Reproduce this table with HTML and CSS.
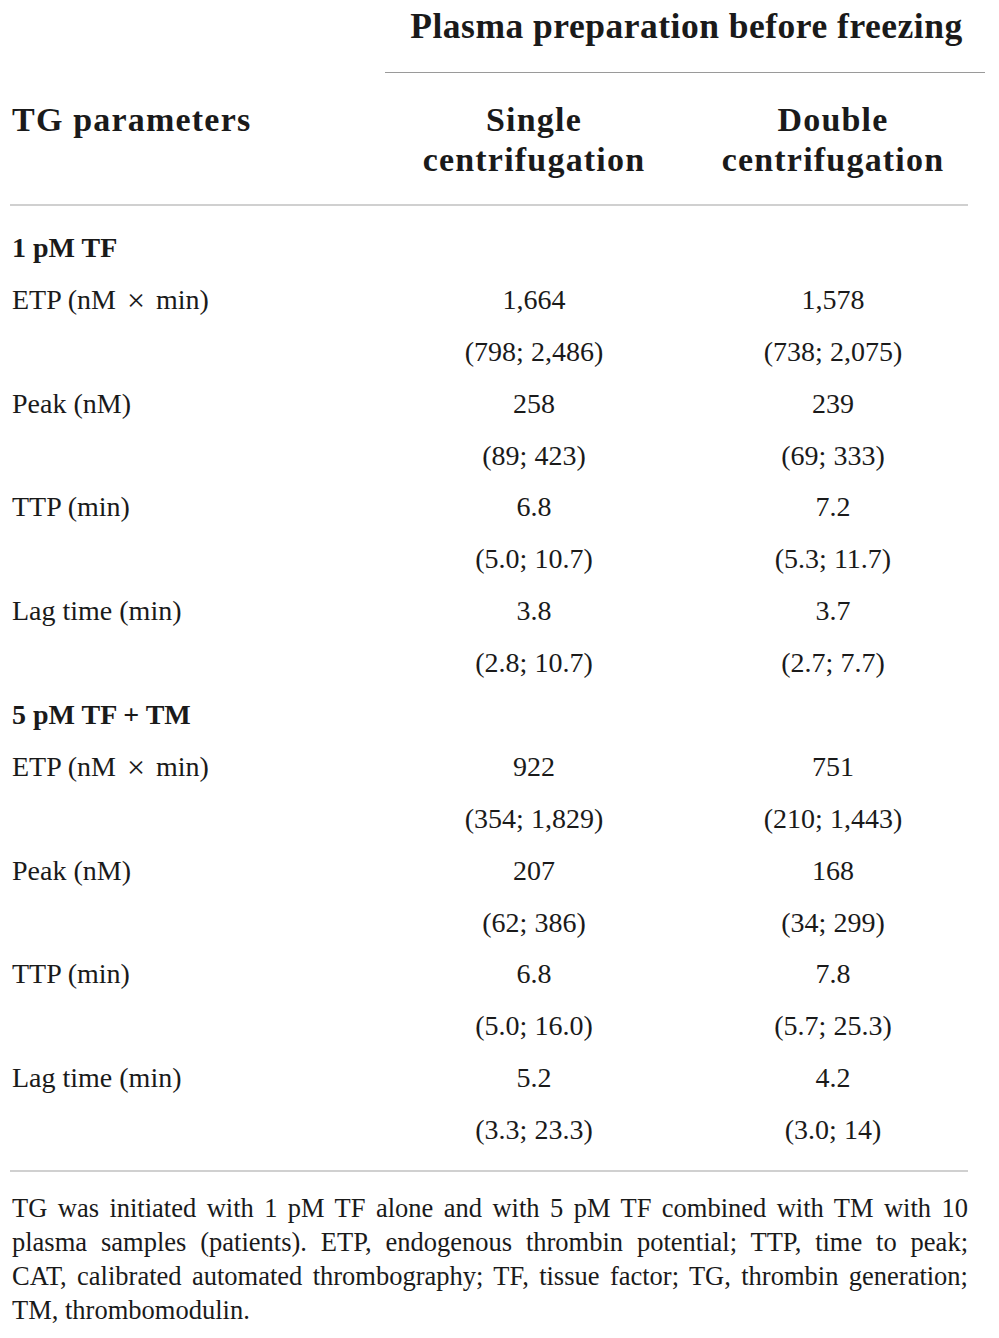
FILE: index.html
```html
<!DOCTYPE html>
<html>
<head>
<meta charset="utf-8">
<link rel="stylesheet" href="styles.css">
</head>
<body>
<div class="page">
  <div class="head-top">
    <div class="spacer"></div>
    <div class="span-title">Plasma preparation before freezing</div>
  </div>
  <div class="head-sub">
    <div class="hcell left">TG parameters</div>
    <div class="hcell">Single<br>centrifugation</div>
    <div class="hcell">Double<br>centrifugation</div>
  </div>
  <div class="body">
    <div class="row group first"><div class="lab">1 pM TF</div><div></div><div></div></div>
    <div class="row"><div class="lab">ETP (nM <span class="times">×</span> min)</div><div class="val">1,664</div><div class="val">1,578</div></div>
    <div class="row"><div class="lab"></div><div class="val">(798; 2,486)</div><div class="val">(738; 2,075)</div></div>
    <div class="row"><div class="lab">Peak (nM)</div><div class="val">258</div><div class="val">239</div></div>
    <div class="row"><div class="lab"></div><div class="val">(89; 423)</div><div class="val">(69; 333)</div></div>
    <div class="row"><div class="lab">TTP (min)</div><div class="val">6.8</div><div class="val">7.2</div></div>
    <div class="row"><div class="lab"></div><div class="val">(5.0; 10.7)</div><div class="val">(5.3; 11.7)</div></div>
    <div class="row"><div class="lab">Lag time (min)</div><div class="val">3.8</div><div class="val">3.7</div></div>
    <div class="row"><div class="lab"></div><div class="val">(2.8; 10.7)</div><div class="val">(2.7; 7.7)</div></div>
    <div class="row group"><div class="lab">5 pM TF + TM</div><div></div><div></div></div>
    <div class="row"><div class="lab">ETP (nM <span class="times">×</span> min)</div><div class="val">922</div><div class="val">751</div></div>
    <div class="row"><div class="lab"></div><div class="val">(354; 1,829)</div><div class="val">(210; 1,443)</div></div>
    <div class="row"><div class="lab">Peak (nM)</div><div class="val">207</div><div class="val">168</div></div>
    <div class="row"><div class="lab"></div><div class="val">(62; 386)</div><div class="val">(34; 299)</div></div>
    <div class="row"><div class="lab">TTP (min)</div><div class="val">6.8</div><div class="val">7.8</div></div>
    <div class="row"><div class="lab"></div><div class="val">(5.0; 16.0)</div><div class="val">(5.7; 25.3)</div></div>
    <div class="row"><div class="lab">Lag time (min)</div><div class="val">5.2</div><div class="val">4.2</div></div>
    <div class="row"><div class="lab"></div><div class="val">(3.3; 23.3)</div><div class="val">(3.0; 14)</div></div>
  </div>
  <div class="note">
    <span class="line">TG was initiated with 1 pM TF alone and with 5 pM TF combined with TM with 10</span>
    <span class="line">plasma samples (patients). ETP, endogenous thrombin potential; TTP, time to peak;</span>
    <span class="line">CAT, calibrated automated thrombography; TF, tissue factor; TG, thrombin generation;</span>
    <span class="line last">TM, thrombomodulin.</span>
  </div>
</div>
</body>
</html>
```
FILE: styles.css
```css
html, body {
  margin: 0;
  padding: 0;
  background: #ffffff;
}
body {
  font-family: "Liberation Serif", "Times New Roman", serif;
  color: #1a1a1a;
}
.page {
  width: 999px;
  padding-left: 10px;
  box-sizing: border-box;
}
.head-top {
  display: grid;
  grid-template-columns: 375px 600px;
}
.span-title {
  font-weight: bold;
  font-size: 35.5px;
  letter-spacing: 0.5px;
  line-height: 40px;
  text-align: center;
  padding: 6px 0 26px 3px;
  border-bottom: 1.5px solid #9a9a9a;
  white-space: nowrap;
}
.head-sub {
  display: grid;
  grid-template-columns: 375px 298px 300px;
  width: 958px;
  padding: 27px 0 24px 0;
  border-bottom: 2px solid #d0d0d0;
  font-weight: bold;
  font-size: 34px;
  letter-spacing: 1.2px;
  line-height: 40px;
}
.hcell {
  text-align: center;
}
.hcell.left {
  text-align: left;
  padding-left: 2px;
}
.body {
  width: 958px;
  padding-bottom: 14px;
  border-bottom: 2px solid #d0d0d0;
}
.row {
  display: grid;
  grid-template-columns: 375px 298px 300px;
  height: 51.9px;
  align-items: center;
  font-size: 28px;
  line-height: 34px;
}
.row.first {
  margin-top: 16px;
}
.row.group .lab {
  font-weight: bold;
}
.lab {
  padding-left: 2px;
  white-space: nowrap;
}
.times {
  font-size: 32px;
  line-height: 1;
  padding: 0 4px;
  vertical-align: -2px;
}
.val {
  text-align: center;
  white-space: nowrap;
}
.note {
  margin: 19px 0 0 0;
  width: 956px;
  padding-left: 2px;
  font-size: 26.5px;
  line-height: 34px;
}
.line {
  display: block;
  white-space: nowrap;
  text-align: justify;
  text-align-last: justify;
}
.line.last {
  text-align: left;
  text-align-last: left;
}
```
